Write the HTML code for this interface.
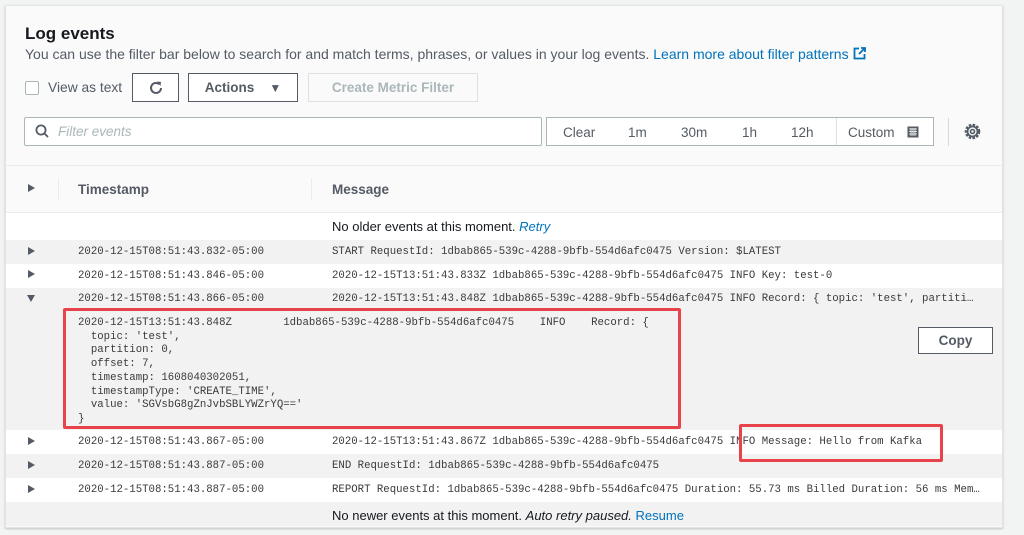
<!DOCTYPE html><html><head><style>
body{margin:0;width:1024px;height:535px;background:#f2f3f3;font-family:"Liberation Sans",sans-serif;position:relative;overflow:hidden;color:#16191f}
.a{position:absolute}
.panel{left:5px;top:5px;width:996px;height:521px;background:#fafafa;border:1px solid #e4e4e4;box-shadow:0 1px 2px rgba(0,0,0,.2)}
.m{font-family:"Liberation Mono",monospace;font-size:10.7px;color:#3a3a3a;white-space:pre}
.btn{border:1px solid #545b64;background:#fff;height:28px;box-sizing:border-box;font-weight:bold;font-size:13.5px;color:#545b64;display:flex;align-items:center;justify-content:center}
.row{left:6px;width:996px}
.tri{width:0;height:0;border-left:7px solid #545b64;border-top:4.5px solid transparent;border-bottom:4.5px solid transparent}
.t{font-size:13.5px;color:#545b64}
</style></head><body>
<div class="a panel"></div>
<div class="a" style="left:25px;top:24px;font-size:17px;font-weight:bold">Log events</div>
<div class="a" style="left:25px;top:46px;font-size:14px;color:#545b64;white-space:nowrap">You can use the filter bar below to search for and match terms, phrases, or values in your log events. <span style="color:#0073bb">Learn more about filter patterns</span> <svg width="13" height="13" style="vertical-align:-1px"><path d="M6 1.5H1.5v10h10V7" fill="none" stroke="#0073bb" stroke-width="1.8"/><path d="M8 1h4v4M12 1L6 7" fill="none" stroke="#0073bb" stroke-width="1.8"/></svg></div>
<div class="a" style="left:25px;top:81px;width:12px;height:12px;border:1px solid #aab7b8;background:#fff;border-radius:2px"></div>
<div class="a t" style="left:48px;top:80px;font-size:13.8px">View as text</div>
<div class="a btn" style="left:132px;top:73px;width:47px;height:29px"><svg width="16" height="16"><path d="M13 8a5 5 0 1 1-1.6-3.7" fill="none" stroke="#545b64" stroke-width="2"/><path d="M9 1.5l4 .5-.5 4z" fill="#545b64"/></svg></div>
<div class="a btn" style="left:188px;top:73px;width:110px;height:29px">Actions&nbsp;&nbsp;&nbsp;&nbsp;<span style="font-size:12px">▼</span></div>
<div class="a btn" style="left:308px;top:73px;width:170px;height:29px;border-color:#e0e0e0;color:#aab7b8;background:#fafafa">Create Metric Filter</div>
<div class="a" style="left:24px;top:117px;width:518px;height:29px;border:1px solid #aab7b8;box-sizing:border-box;background:#fff;border-radius:2px"></div>
<svg class="a" style="left:35px;top:124px" width="14" height="15"><circle cx="6" cy="6" r="4.6" fill="none" stroke="#545b64" stroke-width="1.8"/><path d="M9.5 9.5l3.5 3.5" stroke="#545b64" stroke-width="1.8"/></svg>
<div class="a" style="left:58px;top:124px;font-size:13.5px;font-style:italic;color:#aab7b8">Filter events</div>
<div class="a" style="left:546px;top:117px;width:388px;height:29px;border:1px solid #aab7b8;box-sizing:border-box;background:#fff"></div>
<div class="a" style="left:836px;top:118px;width:1px;height:27px;background:#e0e0e0"></div>
<div class="a t" style="left:563px;top:125px">Clear</div>
<div class="a t" style="left:628px;top:125px">1m</div>
<div class="a t" style="left:681px;top:125px">30m</div>
<div class="a t" style="left:742px;top:125px">1h</div>
<div class="a t" style="left:791px;top:125px">12h</div>
<div class="a t" style="left:848px;top:125px">Custom</div>
<svg class="a" style="left:907px;top:126px" width="12" height="12"><rect x="0.5" y="0.5" width="11" height="11" fill="#545b64"/><path d="M2 3h8M2 5.5h8M2 8h8M4 2v8M6 2v8M8 2v8" stroke="#fff" stroke-width=".8"/></svg>
<div class="a" style="left:948px;top:118px;width:1px;height:28px;background:#d5dbdb"></div>
<svg class="a" style="left:963px;top:122px" width="19" height="19"><circle cx="9.5" cy="9.5" r="6.3" fill="none" stroke="#545b64" stroke-width="3" stroke-dasharray="2.4 1.3"/><circle cx="9.5" cy="9.5" r="5" fill="none" stroke="#545b64" stroke-width="1.8"/><circle cx="9.5" cy="9.5" r="2" fill="none" stroke="#545b64" stroke-width="1.6"/></svg>
<div class="a" style="left:6px;top:165px;width:996px;height:1px;background:#eaeded"></div>
<div class="a tri" style="left:28px;top:184px"></div>
<div class="a" style="left:58px;top:178px;width:1px;height:22px;background:#eaeded"></div>
<div class="a" style="left:311px;top:178px;width:1px;height:22px;background:#eaeded"></div>
<div class="a" style="left:78px;top:182px;font-size:13.5px;font-weight:bold;color:#545b64">Timestamp</div>
<div class="a" style="left:332px;top:182px;font-size:13.5px;font-weight:bold;color:#545b64">Message</div>
<div class="a row" style="top:212px;height:28px;background:#fff;border-top:1px solid #eaeded"></div>
<div class="a" style="left:332px;top:219px;font-size:13px;color:#16191f">No older events at this moment. <i style="color:#0073bb">Retry</i></div>
<div class="a row" style="top:240px;height:24px;background:#f2f2f2"></div>
<div class="a row" style="top:264px;height:24px;background:#fff"></div>
<div class="a row" style="top:288px;height:142px;background:#f2f2f2"></div>
<div class="a row" style="top:430px;height:24px;background:#fff"></div>
<div class="a row" style="top:454px;height:24px;background:#f2f2f2"></div>
<div class="a row" style="top:478px;height:24px;background:#fff"></div>
<div class="a row" style="top:502px;height:24px;background:#f2f2f2"></div>
<div class="a tri" style="left:28px;top:247px"></div>
<div class="a tri" style="left:28px;top:270px"></div>
<div class="a" style="left:27px;top:295px;width:0;height:0;border-top:7px solid #545b64;border-left:4.5px solid transparent;border-right:4.5px solid transparent"></div>
<div class="a tri" style="left:28px;top:437px"></div>
<div class="a tri" style="left:28px;top:461px"></div>
<div class="a tri" style="left:28px;top:485px"></div>
<div class="a m" style="left:78px;top:246px">2020-12-15T08:51:43.832-05:00</div>
<div class="a m" style="left:332px;top:246px">START RequestId: 1dbab865-539c-4288-9bfb-554d6afc0475 Version: $LATEST</div>
<div class="a m" style="left:78px;top:270px">2020-12-15T08:51:43.846-05:00</div>
<div class="a m" style="left:332px;top:270px">2020-12-15T13:51:43.833Z 1dbab865-539c-4288-9bfb-554d6afc0475 INFO Key: test-0</div>
<div class="a m" style="left:78px;top:293px">2020-12-15T08:51:43.866-05:00</div>
<div class="a m" style="left:332px;top:293px">2020-12-15T13:51:43.848Z 1dbab865-539c-4288-9bfb-554d6afc0475 INFO Record: { topic: 'test', partiti…</div>
<div class="a m" style="left:78px;top:317px;line-height:13.7px">2020-12-15T13:51:43.848Z        1dbab865-539c-4288-9bfb-554d6afc0475    INFO    Record: {
  topic: 'test',
  partition: 0,
  offset: 7,
  timestamp: 1608040302051,
  timestampType: 'CREATE_TIME',
  value: 'SGVsbG8gZnJvbSBLYWZrYQ=='
}</div>
<div class="a" style="left:63px;top:308px;width:612px;height:115px;border:3px solid #e8424a;border-radius:2px"></div>
<div class="a btn" style="left:918px;top:327px;width:75px;height:27px;font-size:13.5px">Copy</div>
<div class="a m" style="left:78px;top:436px">2020-12-15T08:51:43.867-05:00</div>
<div class="a m" style="left:332px;top:436px">2020-12-15T13:51:43.867Z 1dbab865-539c-4288-9bfb-554d6afc0475 INFO Message: Hello from Kafka</div>
<div class="a" style="left:739px;top:424px;width:198px;height:32px;border:3px solid #e8424a;border-radius:2px"></div>
<div class="a m" style="left:78px;top:460px">2020-12-15T08:51:43.887-05:00</div>
<div class="a m" style="left:332px;top:460px">END RequestId: 1dbab865-539c-4288-9bfb-554d6afc0475</div>
<div class="a m" style="left:78px;top:484px">2020-12-15T08:51:43.887-05:00</div>
<div class="a m" style="left:332px;top:484px">REPORT RequestId: 1dbab865-539c-4288-9bfb-554d6afc0475 Duration: 55.73 ms Billed Duration: 56 ms Mem…</div>
<div class="a" style="left:332px;top:508px;font-size:13px">No newer events at this moment. <i>Auto retry paused.</i> <span style="color:#0073bb">Resume</span></div>
</body></html>
